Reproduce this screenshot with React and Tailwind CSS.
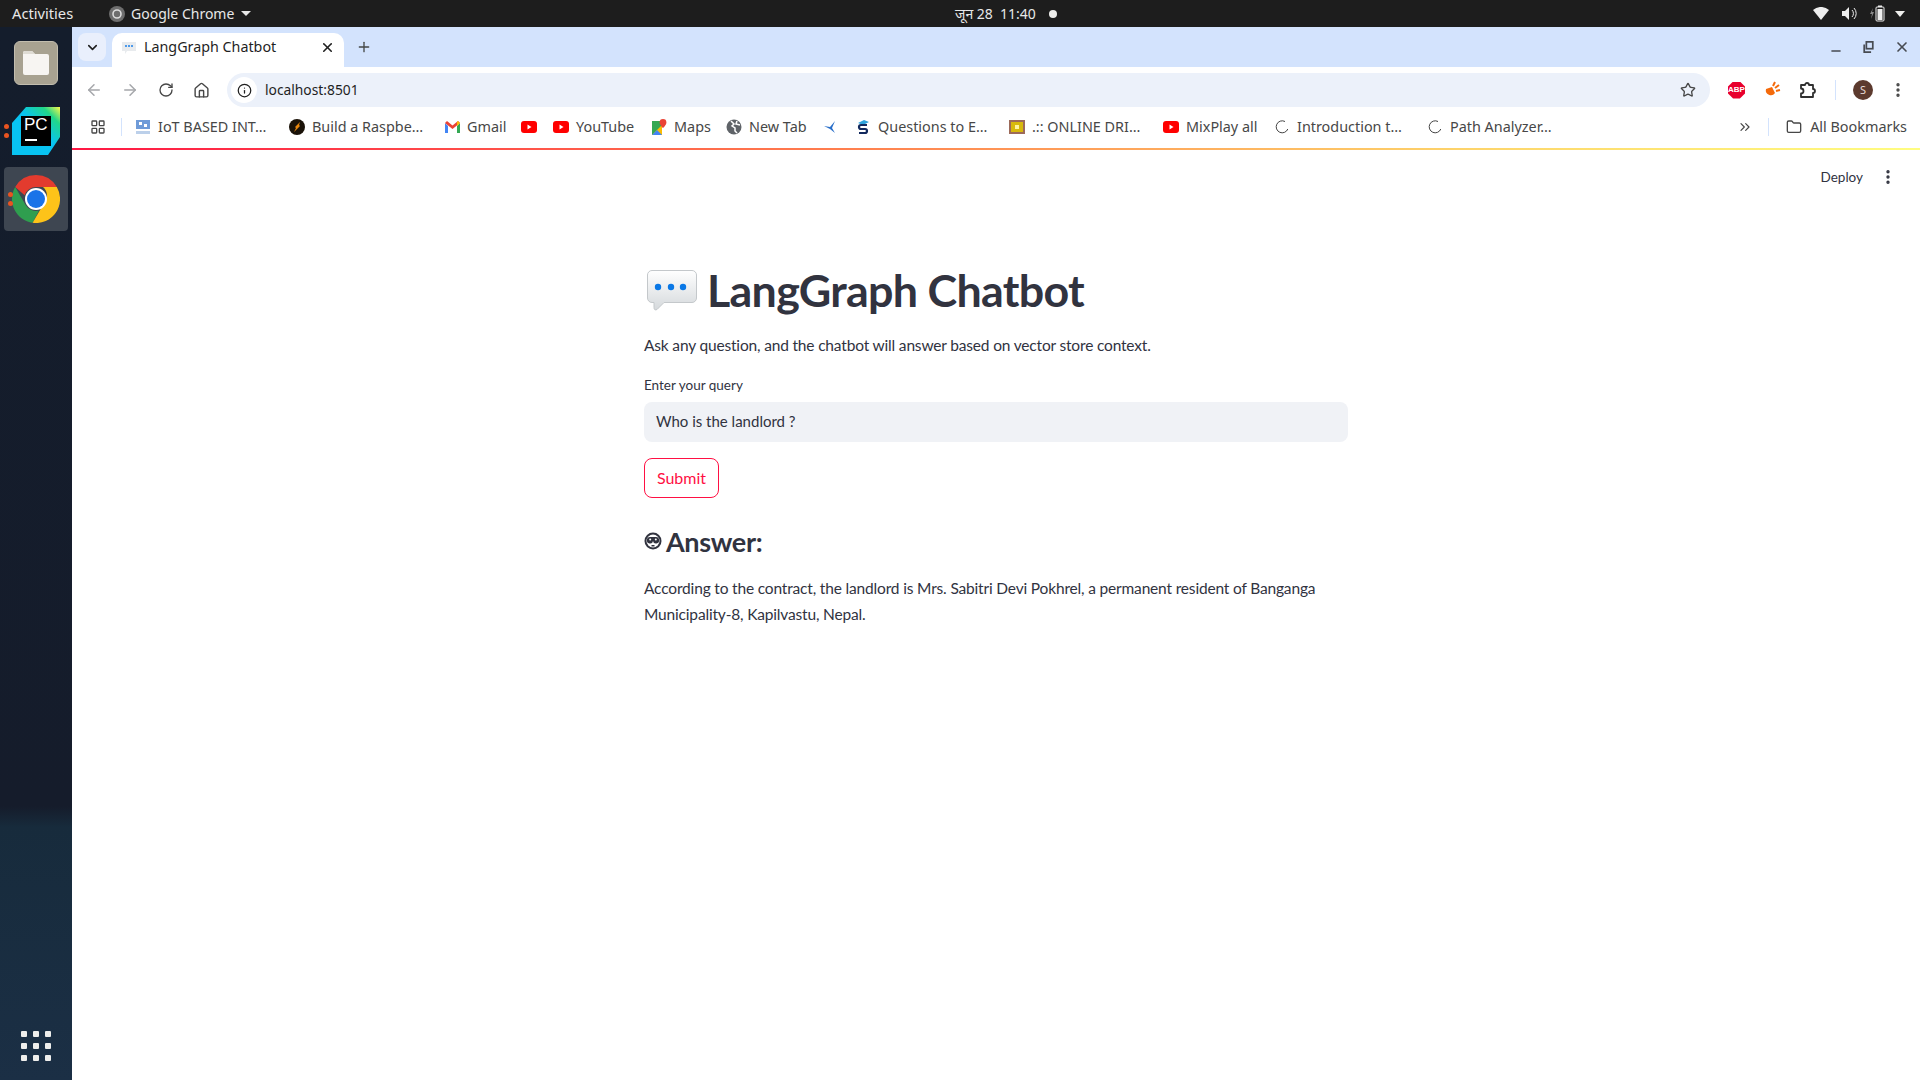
import { ArrowLeft, ArrowRight, RotateCw, Home, Info, Star, MoreVertical, X, Plus, ChevronDown, ChevronsRight, Folder, LayoutGrid, Minus } from 'lucide-react'

const ui = "font-['Noto_Sans',sans-serif]"
const st = "font-['Lato','Noto_Sans',sans-serif]"

function ChromeLogo({ size = 48 }) {
  return (
    <svg width={size} height={size} viewBox="0 0 48 48">
      <path d="M24 0a24 24 0 0 1 20.8 12H24a12 12 0 0 0-11.4 8.2L3.2 12A24 24 0 0 1 24 0z" fill="#e33b2e" />
      <path d="M3.2 12l10.4 18A12 12 0 0 0 27 35.6L20.6 47.8A24 24 0 0 1 3.2 12z" fill="#2f9e4f" />
      <path d="M44.8 12A24 24 0 0 1 20.6 47.8L31 30a12 12 0 0 0 0-18z" fill="#fdc319" />
      <circle cx="24" cy="24" r="11" fill="#fff" />
      <circle cx="24" cy="24" r="9" fill="#1a73e8" />
    </svg>
  )
}

function PyCharmLogo() {
  return (
    <div className="relative w-12 h-12">
      <svg width="48" height="48" viewBox="0 0 48 48" className="absolute inset-0">
        <defs>
          <linearGradient id="pc" x1="0" y1="1" x2="1" y2="0">
            <stop offset="0.55" stopColor="#08c3f2" />
            <stop offset="0.82" stopColor="#21d789" />
            <stop offset="1" stopColor="#fcf84a" />
          </linearGradient>
        </defs>
        <path d="M14 0H48V30L36 48H0V16z" fill="url(#pc)" />
        <rect x="9" y="9" width="30" height="30" fill="#000" />
        <rect x="13" y="32" width="12" height="2" fill="#fff" />
      </svg>
      <span className="absolute left-[12px] top-[8px] text-[17px] leading-[20px] font-medium text-white font-['Liberation_Sans',sans-serif]">PC</span>
    </div>
  )
}

function FilesIcon() {
  return (
    <div className="w-[44px] h-[44px] rounded-[6px] bg-[#a8a291] border border-[#c2bdae] flex items-center justify-center">
      <svg width="28" height="28" viewBox="0 0 28 28">
        <path d="M1 4a2 2 0 0 1 2-2h7l3 3h12a2 2 0 0 1 2 2v17a2 2 0 0 1-2 2H3a2 2 0 0 1-2-2z" fill="#f7f5f2" />
        <path d="M1 4a2 2 0 0 1 2-2h7l3 3H1z" fill="#dfdcd4" />
      </svg>
    </div>
  )
}

function RunDots() {
  return (
    <div className="absolute left-[4px] top-1/2 -translate-y-1/2 flex flex-col gap-[4px]">
      <span className="w-[5px] h-[5px] rounded-full bg-[#e95420]" />
      <span className="w-[5px] h-[5px] rounded-full bg-[#e95420]" />
    </div>
  )
}

function Dock() {
  return (
    <aside className="w-[72px] shrink-0 flex flex-col items-center justify-between pt-[14px] pb-[19px] bg-[linear-gradient(180deg,#141d2c_0%,#151c2b_74%,#172b3c_76%,#1b2f45_100%)]">
      <div className="flex flex-col items-center w-full">
        <FilesIcon />
        <div className="relative w-full flex justify-center mt-[22px]">
          <RunDots />
          <PyCharmLogo />
        </div>
        <div className="relative mt-[12px] w-[64px] h-[64px] rounded-[4px] bg-[#3e4651] flex items-center justify-center">
          <div className="absolute -left-[0px] top-0 h-full"><RunDots /></div>
          <ChromeLogo />
        </div>
      </div>
      <div className="grid grid-cols-3 gap-[6px]">
        {Array.from({ length: 9 }).map((_, i) => (
          <span key={i} className="w-[6px] h-[6px] rounded-[1px] bg-[#eeeeec]" />
        ))}
      </div>
    </aside>
  )
}

function TopBar() {
  return (
    <header className={`h-[27px] shrink-0 bg-[#1d1d1d] text-[#e8e8e8] flex items-center text-[14px] leading-none pl-[12px] pr-[15px] ${ui}`}>
      <div className="flex items-center w-[943px]">
        <span className="w-[97px] text-[14.7px]">Activities</span>
        <svg width="16" height="16" viewBox="0 0 16 16" className="mr-[6px]">
          <circle cx="8" cy="8" r="8" fill="#6e6e6e" />
          <circle cx="8" cy="8" r="4" fill="none" stroke="#ddd" strokeWidth="1.6" />
        </svg>
        <span>Google Chrome</span>
        <span className="ml-[7px] w-0 h-0 border-x-[5px] border-x-transparent border-t-[5px] border-t-[#e8e8e8]" />
      </div>
      <div className="flex items-center">
        <span className="font-['Noto_Sans','DejaVu_Sans',sans-serif]">जून 28&nbsp;&nbsp;11:40</span>
        <span className="ml-[13px] w-[8px] h-[8px] rounded-full bg-[#eeeeec]" />
      </div>
      <div className="ml-auto flex items-center">
        <svg width="16" height="13" viewBox="0 0 16 13"><path d="M0 3a12 12 0 0 1 16 0L8 13z" fill="#eee" /></svg>
        <svg width="15" height="15" viewBox="0 0 15 15" className="ml-[13px]">
          <path d="M0 5h3l4-4v13l-4-4H0z" fill="#eee" />
          <path d="M10 4a5 5 0 0 1 0 7M12 2a8 8 0 0 1 0 11" stroke="#eee" fill="none" strokeWidth="1" />
        </svg>
        <svg width="15" height="17" viewBox="0 0 15 17" className="ml-[13px]">
          <path d="M3 3L0 9h2l-1 5 3-7H2z" fill="#888" />
          <rect x="6" y="2" width="8" height="14" rx="1" fill="none" stroke="#eee" />
          <rect x="8" y="0.5" width="4" height="1.5" fill="#eee" />
          <rect x="7.5" y="4" width="5" height="11" fill="#eee" />
        </svg>
        <span className="ml-[10px] w-0 h-0 border-x-[5px] border-x-transparent border-t-[6px] border-t-[#eeeeec]" />
      </div>
    </header>
  )
}

function TabStrip() {
  return (
    <div className={`h-[40px] shrink-0 bg-[#d3e3fd] flex items-end pl-[6px] pr-[10px] ${ui}`}>
      <button className="w-[28px] h-[28px] mb-[6px] rounded-[8px] bg-[#e9effc] flex items-center justify-center">
        <ChevronDown size={15} strokeWidth={2.5} className="text-[#1f1f1f]" />
      </button>
      <div className="ml-[6px] w-[232px] h-[34px] bg-white rounded-t-[10px] flex items-center pl-[9px] pr-[7px] pb-[6px]">
        <svg width="16" height="16" viewBox="0 0 16 16">
          <path d="M1 3h14v9H6l-2 3v-3H1z" fill="#e8ebee" />
          <circle cx="5" cy="7" r="1" fill="#1a7fe8" /><circle cx="8" cy="7" r="1" fill="#1a7fe8" /><circle cx="11" cy="7" r="1" fill="#1a7fe8" />
        </svg>
        <span className="ml-[7px] text-[14.3px] text-[#1f1f1f] whitespace-nowrap w-[176px]">LangGraph Chatbot</span>
        <X size={15} strokeWidth={2.5} className="text-[#1f1f1f]" />
      </div>
      <Plus size={16} strokeWidth={2} className="ml-[12px] mb-[12px] text-[#444746]" />
      <div className="ml-auto flex items-center gap-[20px] mb-[12px] text-[#474b52]">
        <Minus size={14} strokeWidth={2.5} className="translate-y-[4px]" />
        <svg width="11" height="12" viewBox="0 0 12 14">
          <rect x="3.5" y="1" width="7.5" height="8" fill="none" stroke="currentColor" strokeWidth="2" />
          <path d="M1 4v9h8" fill="none" stroke="currentColor" strokeWidth="2" />
        </svg>
        <X size={16} strokeWidth={2.5} />
      </div>
    </div>
  )
}

function Toolbar() {
  return (
    <div className={`h-[40px] shrink-0 bg-white rounded-t-[10px] flex items-center pt-[6px] pl-[13px] pr-[12px] text-[#474747] ${ui}`}>
      <div className="flex items-center gap-[18px]">
        <ArrowLeft size={18} strokeWidth={2} className="text-[#a5a7ab]" />
        <ArrowRight size={18} strokeWidth={2} className="text-[#a5a7ab]" />
        <RotateCw size={16} strokeWidth={2} className="ml-[1px]" />
        <Home size={17} strokeWidth={2} className="ml-[1px]" />
      </div>
      <div className="ml-[17px] w-[1483px] h-[34px] rounded-full bg-[#ecf1fa] flex items-center pl-[4px] pr-[14px]">
        <span className="w-[26px] h-[26px] rounded-full bg-white flex items-center justify-center">
          <Info size={15} strokeWidth={2} className="text-[#1f1f1f]" />
        </span>
        <span className="ml-[8px] text-[13.8px] text-[#1f1f1f]">localhost:8501</span>
        <Star size={16} strokeWidth={2} className="ml-auto text-[#474747]" />
      </div>
      <div className="ml-[18px] flex items-center">
        <span className="w-[17px] h-[17px] bg-[#e8002d] text-white text-[8px] font-bold flex items-center justify-center [clip-path:polygon(30%_0,70%_0,100%_30%,100%_70%,70%_100%,30%_100%,0_70%,0_30%)] font-['Liberation_Sans',sans-serif]">ABP</span>
        <svg width="18" height="18" viewBox="0 0 18 18" className="ml-[18px]">
          <path d="M3 8l6-2 3 6a5 5 0 0 1-9-4z" fill="#f46a0b" />
          <path d="M10 5l2-4M12 7l4-3M13 10l4-1" stroke="#f46a0b" strokeWidth="2" />
        </svg>
        <svg width="18" height="18" viewBox="0 0 18 18" className="ml-[18px]">
          <path d="M2 4h4a2 2 0 0 1 4 0h4v4a2 2 0 0 1 0 4v4H2v-3.500a2 2 0 0 0 0-5z" fill="none" stroke="#303030" strokeWidth="1.800" strokeLinejoin="round" />
        </svg>
        <span className="ml-[18px] w-[1px] h-[20px] bg-[#d3e3fd]" />
        <span className="ml-[17px] w-[20px] h-[20px] rounded-full bg-[#5c3a2e] text-[#e8dcd6] text-[11px] flex items-center justify-center">S</span>
        <MoreVertical size={18} strokeWidth={2.5} className="ml-[16px] text-[#474747]" />
      </div>
    </div>
  )
}

const yt = <svg width="16" height="12" viewBox="0 0 16 12"><rect width="16" height="12" rx="3" fill="#f00" /><path d="M6.5 3.5v5l4-2.500z" fill="#fff" /></svg>
const spin = <svg width="14" height="14" viewBox="0 0 14 14"><path d="M10 1.500A6 6 0 1 0 12.800 9" fill="none" stroke="#444" strokeWidth="1" /></svg>

const bookmarks = [
  { w: 'w-[154px]', label: 'IoT BASED INT…', icon: <svg width="16" height="16" viewBox="0 0 16 16"><rect x="1" y="1" width="14" height="9" fill="#6f9bd8" /><rect x="4" y="3" width="3" height="3" fill="#fff" /><rect x="9" y="5" width="3" height="3" fill="#fff" /><rect x="1" y="12" width="14" height="3" fill="#bcd0ea" /></svg> },
  { w: 'w-[155px]', label: 'Build a Raspbe…', icon: <svg width="16" height="16" viewBox="0 0 16 16"><circle cx="8" cy="8" r="8" fill="#1a1208" /><path d="M11 3L6 8l1 1-2 4 6-6-1-1z" fill="#e8860c" /></svg> },
  { w: 'w-[77px]', label: 'Gmail', icon: <svg width="15" height="12" viewBox="0 0 15 12"><path d="M0 2v10h3V5z" fill="#4285f4" /><path d="M15 2v10h-3V5z" fill="#34a853" /><path d="M0 2l7.500 6L15 2 13 0 7.500 4.500 2 0z" fill="#ea4335" /><path d="M12 5l3-3-2-2-1 1z" fill="#fbbc04" /></svg> },
  { w: 'w-[32px]', label: '', icon: yt },
  { w: 'w-[98px]', label: 'YouTube', icon: yt },
  { w: 'w-[75px]', label: 'Maps', icon: <svg width="16" height="16" viewBox="0 0 16 16"><path d="M1 2h10v14H1z" fill="#34a853" /><path d="M1 16L11 6v10z" fill="#fbbc04" /><path d="M1 16l5-5 5 5z" fill="#4285f4" /><path d="M12 0a3.400 3.400 0 0 1 3.400 3.400c0 2.400-3.400 5.600-3.400 5.600S8.600 5.800 8.600 3.400A3.400 3.400 0 0 1 12 0z" fill="#ea4335" /></svg> },
  { w: 'w-[97px]', label: 'New Tab', icon: <svg width="16" height="16" viewBox="0 0 16 16"><circle cx="8" cy="8" r="7.500" fill="#5f6368" /><path d="M5 2l3 3-2 2 3 2v3l2 2M11 2l-1 3 4 1" stroke="#fff" strokeWidth="1.500" fill="none" /></svg> },
  { w: 'w-[32px]', label: '', icon: <svg width="16" height="16" viewBox="0 0 16 16"><path d="M1 7l6 1 5-6-3 7 3 5-5-4z" fill="#2a6fc9" /></svg> },
  { w: 'w-[154px]', label: 'Questions to E…', icon: <svg width="16" height="16" viewBox="0 0 16 16"><path d="M3 4l6-3 5 2-6 3z" fill="#2fa3dc" /><path d="M12 6H6a2 2 0 0 0 0 4h4a2 2 0 0 1 0 4H4" stroke="#12295e" strokeWidth="2.200" fill="none" /></svg> },
  { w: 'w-[154px]', label: '.:: ONLINE DRI…', icon: <svg width="16" height="16" viewBox="0 0 16 16"><rect width="16" height="14" y="1" fill="#9c6a5a" /><rect x="2" y="3" width="12" height="10" fill="#d8b90c" /><rect x="6" y="6" width="4" height="4" fill="#fff3a0" /></svg> },
  { w: 'w-[111px]', label: 'MixPlay all', icon: yt },
  { w: 'w-[153px]', label: 'Introduction t…', icon: spin },
  { w: 'w-[140px]', label: 'Path Analyzer…', icon: spin },
]

function BookmarksBar() {
  return (
    <div className={`h-[41px] shrink-0 bg-white flex items-center pb-[1px] pl-[18px] pr-[13px] text-[14.4px] text-[#474747] whitespace-nowrap ${ui}`}>
      <LayoutGrid size={16} strokeWidth={2} className="text-[#474747]" />
      <span className="ml-[15px] w-[1px] h-[18px] bg-[#d3e3fd]" />
      <div className="ml-[13px] flex items-center">
        {bookmarks.map((b, i) => (
          <div key={i} className={`flex items-center gap-[7px] ${b.w}`}>
            <span className="w-[16px] flex justify-center shrink-0">{b.icon}</span>
            {b.label && <span>{b.label}</span>}
          </div>
        ))}
      </div>
      <ChevronsRight size={16} strokeWidth={1.8} className="ml-auto text-[#474747]" />
      <span className="ml-[15px] w-[1px] h-[18px] bg-[#d3e3fd]" />
      <Folder size={16} strokeWidth={2} className="ml-[17px] text-[#474747]" />
      <span className="ml-[8px]">All Bookmarks</span>
    </div>
  )
}

function Page() {
  return (
    <main className={`relative flex-1 bg-white text-[#31333f] ${st}`}>
      <div className="absolute right-[23px] top-[17px] flex items-center gap-[16px]">
        <span className="text-[13.5px] leading-[20px]">Deploy</span>
        <MoreVertical size={18} strokeWidth={2.5} className="text-[#31333f]" />
      </div>
      <div className="w-[704px] ml-[572px] pt-[112px]">
        <h1 className="flex items-center text-[44.8px] leading-[56px] font-bold tracking-[-0.7px] whitespace-nowrap">
          <svg width="50" height="41" viewBox="0 0 50 41" className="ml-[3px] mr-[10px]">
            <defs>
              <linearGradient id="bubble" x1="0" y1="0" x2="0" y2="1">
                <stop offset="0" stopColor="#ffffff" />
                <stop offset="1" stopColor="#d5d9dc" />
              </linearGradient>
            </defs>
            <path d="M5 .5h40a4.500 4.500 0 0 1 4.500 4.500v23a4.500 4.500 0 0 1-4.500 4.500H17l-7 7c-2 1-3 0-3-2v-5H5A4.500 4.500 0 0 1 .5 28V5A4.500 4.500 0 0 1 5 .5z" fill="url(#bubble)" stroke="#c4c8cb" strokeWidth="1" />
            <circle cx="11" cy="17" r="3.200" fill="#0a78e6" />
            <circle cx="24" cy="17" r="3.200" fill="#0a78e6" />
            <circle cx="36" cy="17" r="3.200" fill="#0a78e6" />
          </svg>
          LangGraph Chatbot
        </h1>
        <p className="mt-[14px] text-[15.5px] leading-[26px] tracking-[-0.17px]">Ask any question, and the chatbot will answer based on vector store context.</p>
        <label className="block mt-[17px] text-[13.5px] leading-[20px]">Enter your query</label>
        <div className="mt-[7px] h-[40px] rounded-[8px] bg-[#f0f2f6] px-[12px] pb-[1px] flex items-center text-[15px]">Who is the landlord ?</div>
        <button className="mt-[16px] block h-[40px] w-[75px] rounded-[8px] border border-[#ff0f43] text-[#ff0f43] text-[16px] bg-white">Submit</button>
        <h3 className="mt-[22px] flex items-center text-[27px] leading-[44px] font-bold tracking-[-0.35px]">
          <svg width="18" height="18" viewBox="0 0 18 18" className="mr-[4px] -mt-[2px]">
            <circle cx="9" cy="9" r="8.500" fill="#31333f" />
            <circle cx="9" cy="9" r="6.500" fill="#fff" />
            <path d="M3 7a3 3 0 0 1 3-2h6a3 3 0 0 1 3 2v1a2.500 2.500 0 0 1-6 1 2.500 2.500 0 0 1-6-1z" fill="#31333f" />
            <circle cx="6.200" cy="7.500" r="1" fill="#fff" />
            <circle cx="11.800" cy="7.500" r="1" fill="#fff" />
            <rect x="7.500" y="13" width="3" height="1.500" fill="#31333f" />
          </svg>
          Answer:
        </h3>
        <p className="mt-[11px] text-[15.5px] leading-[26px] tracking-[-0.17px]">According to the contract, the landlord is Mrs. Sabitri Devi Pokhrel, a permanent resident of Banganga Municipality-8, Kapilvastu, Nepal.</p>
      </div>
    </main>
  )
}

export default function App() {
  return (
    <div className="w-[1920px] h-[1080px] flex flex-col overflow-hidden bg-white">
      <TopBar />
      <div className="flex-1 flex min-h-0">
        <Dock />
        <div className="flex-1 min-w-0 flex flex-col">
          <TabStrip />
          <Toolbar />
          <BookmarksBar />
          <div className="h-[2px] shrink-0 bg-[linear-gradient(90deg,#ff1744_0%,#ff7a4d_40%,#fdd36a_75%,#fffd80_100%)]" />
          <Page />
        </div>
      </div>
    </div>
  )
}
